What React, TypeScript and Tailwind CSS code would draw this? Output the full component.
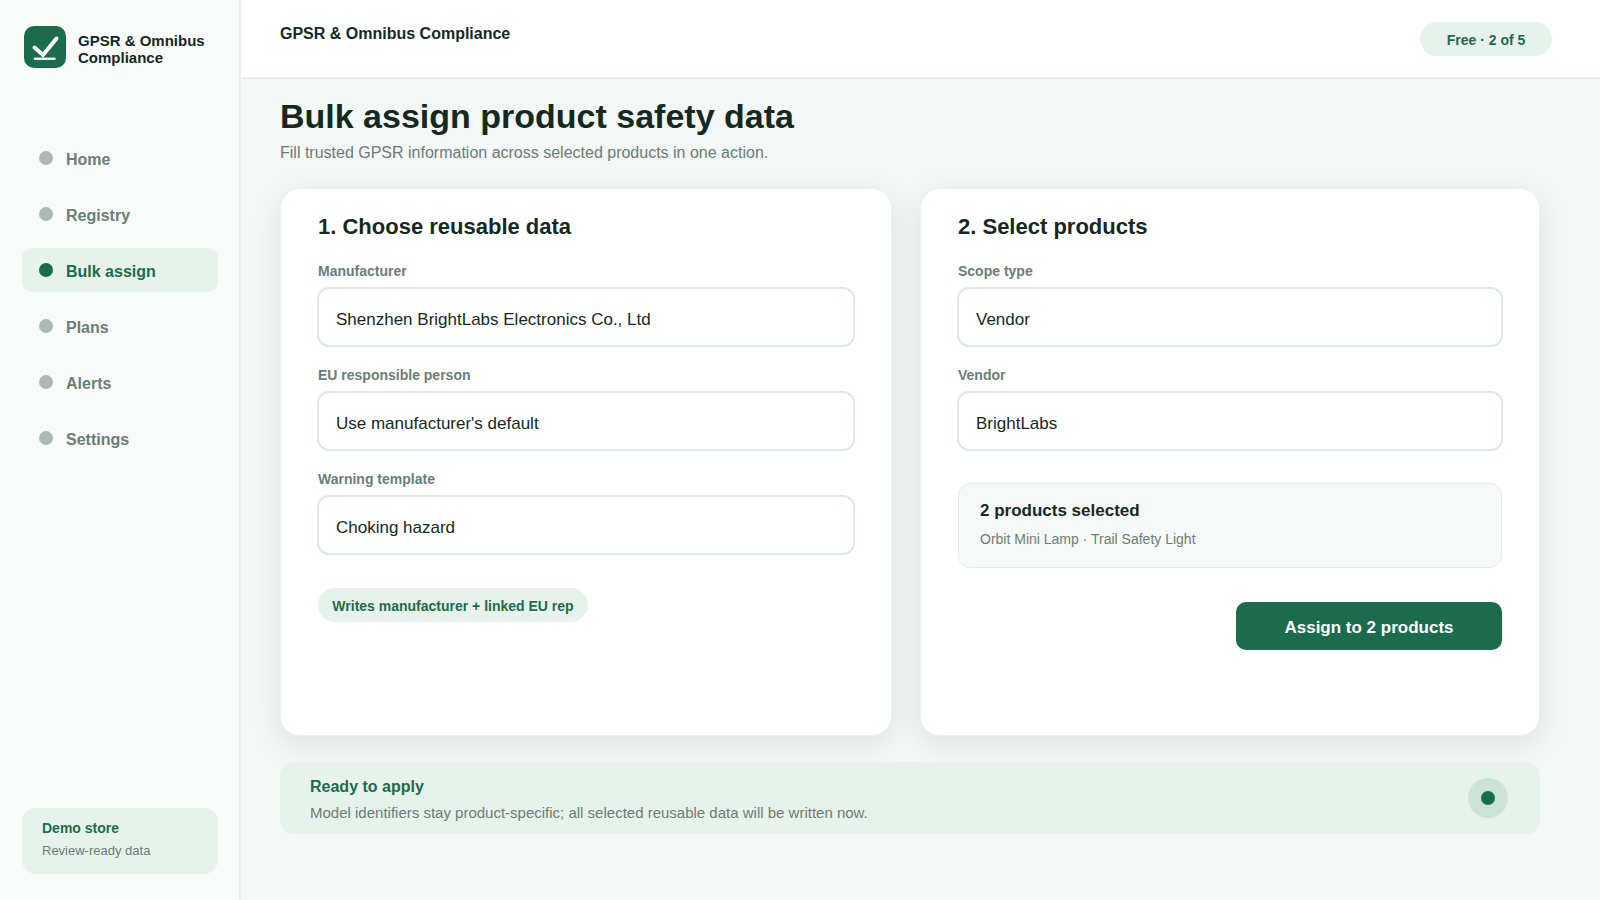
const navItems = ["Home", "Registry", "Bulk assign", "Plans", "Alerts", "Settings"];

const Logo = () => (
  <div className="flex h-[42px] w-[42px] shrink-0 items-center justify-center rounded-[10px] bg-[#1b6c4d]">
    <svg viewBox="0 0 42 42" className="h-[42px] w-[42px]" aria-hidden="true">
      <path d="M10.5 21.5 L19 29 L32.5 12.5" fill="none" stroke="#fff" strokeWidth="4" strokeLinecap="round" strokeLinejoin="miter" />
      <path d="M11 32.7 H30.5" fill="none" stroke="#e8f1ec" strokeWidth="2.6" strokeLinecap="round" />
    </svg>
  </div>
);

const Sidebar = () => (
  <aside className="flex h-[900px] w-[241px] shrink-0 flex-col border-r-2 border-[#e9efec] bg-[#f9fbfa]">
    <div className="flex items-center gap-3 pl-6 pt-[26px]">
      <Logo />
      <div className="pt-1 text-[15px] font-bold leading-[17px] text-[#15291f]">
        GPSR &amp; Omnibus
        <br />
        Compliance
      </div>
    </div>
    <nav className="mt-[68px] flex flex-col gap-3 pl-[22px]">
      {navItems.map((item) => {
        const active = item === "Bulk assign";
        return (
          <div
            key={item}
            className={
              active
                ? "flex h-[44px] w-[196px] gap-[13px] rounded-[10px] bg-[#e7f2ec] pl-[17px] pt-[15px] text-[#1b6c4d]"
                : "flex h-[44px] w-[196px] gap-[13px] rounded-[10px] pl-[17px] pt-[15px] text-[#6b7d75]"
            }
          >
            <span className={active ? "h-[14px] w-[14px] rounded-full bg-[#1b6c4d]" : "h-[14px] w-[14px] rounded-full bg-[#adbab4]"} />
            <span className="text-[16px] font-bold leading-[18px]">{item}</span>
          </div>
        );
      })}
    </nav>
    <div className="mb-[26px] ml-[22px] mt-auto h-[66px] w-[196px] rounded-[14px] bg-[#e7f2ec] px-5 pt-[12px]">
      <div className="text-[14px] font-bold leading-[16px] text-[#1b6c4d]">Demo store</div>
      <div className="mt-[7px] text-[13px] leading-[16px] text-[#6b7d75]">Review-ready data</div>
    </div>
  </aside>
);

const Field = ({ label, value }: { label: string; value: string }) => (
  <div className="flex flex-col">
    <label className="pl-[1px] text-[14px] font-bold leading-[16px] text-[#6b7d75]">{label}</label>
    <div className="mt-[8px] flex h-[60px] items-center rounded-[12px] border-2 border-[#dde8e4] bg-white pl-[17px] pt-[6px] text-[17px] text-[#15291f]">
      {value}
    </div>
  </div>
);

const App = () => {
  return (
    <div className="flex h-[900px] w-[1600px] overflow-hidden bg-[#f3f7f5] font-['Liberation_Sans',Arial,sans-serif]">
      <Sidebar />
      <div className="flex min-w-0 flex-1 flex-col">
        <header className="flex h-[79px] shrink-0 items-start justify-between border-b-2 border-[#e9efec] bg-white pl-[39px] pr-12">
          <div className="pt-6 text-[16px] font-bold leading-[20px] text-[#15291f]">GPSR &amp; Omnibus Compliance</div>
          <div className="mt-[22px] flex h-[34px] w-[132px] items-center justify-center rounded-full bg-[#e7f2ec] pt-[2px] text-[14px] font-bold text-[#1b6c4d]">
            Free · 2 of 5
          </div>
        </header>
        <main className="flex flex-col pl-[39px]">
          <h1 className="mt-[17px] text-[34px] font-bold leading-[40px] text-[#15291f]">Bulk assign product safety data</h1>
          <p className="mt-[7px] text-[16px] leading-[20px] text-[#6b7d75]">Fill trusted GPSR information across selected products in one action.</p>
          <div className="mt-[25px] grid h-[548px] grid-cols-[612px_620px] gap-7">
            <section className="rounded-[20px] border border-[#edf2ef] bg-white px-[36px] pt-[25px] shadow-[0_8px_32px_rgba(22,38,31,0.09)]">
              <h2 className="pl-[1px] text-[22px] font-bold leading-[26px] text-[#15291f]">1. Choose reusable data</h2>
              <div className="mt-[23px] flex flex-col gap-[20px]">
                <Field label="Manufacturer" value="Shenzhen BrightLabs Electronics Co., Ltd" />
                <Field label="EU responsible person" value="Use manufacturer's default" />
                <Field label="Warning template" value="Choking hazard" />
              </div>
              <div className="ml-[1px] mt-[33px] inline-flex h-[34px] w-[270px] items-center justify-center rounded-full bg-[#e7f2ec] pt-[3px] text-[14px] font-bold text-[#1b6c4d]">
                Writes manufacturer + linked EU rep
              </div>
            </section>
            <section className="flex flex-col rounded-[20px] border border-[#edf2ef] bg-white px-[36px] pt-[25px] shadow-[0_8px_32px_rgba(22,38,31,0.09)]">
              <h2 className="pl-[1px] text-[22px] font-bold leading-[26px] text-[#15291f]">2. Select products</h2>
              <div className="mt-[23px] flex flex-col gap-[20px]">
                <Field label="Scope type" value="Vendor" />
                <Field label="Vendor" value="BrightLabs" />
              </div>
              <div className="mx-[1px] mt-[32px] h-[85px] rounded-[12px] border border-[#e4ebe8] bg-[#f7f9f8] px-[21px] pt-[17px]">
                <div className="text-[17px] font-bold leading-[20px] text-[#15291f]">2 products selected</div>
                <div className="mt-[9px] text-[14px] leading-[18px] text-[#6b7d75]">Orbit Mini Lamp · Trail Safety Light</div>
              </div>
              <div className="mr-[1px] mt-[34px] flex justify-end">
                <button className="h-[48px] w-[266px] rounded-[10px] bg-[#1b6c4d] pt-[3px] text-[17px] font-bold text-white">Assign to 2 products</button>
              </div>
            </section>
          </div>
          <div className="mt-[26px] flex h-[72px] w-[1260px] items-center justify-between rounded-[14px] bg-[#e7f2ec] pl-[30px] pr-[32px]">
            <div className="pt-1">
              <div className="text-[16px] font-bold leading-[20px] text-[#1b6c4d]">Ready to apply</div>
              <div className="mt-[6px] text-[15px] leading-[20px] text-[#6b7d75]">Model identifiers stay product-specific; all selected reusable data will be written now.</div>
            </div>
            <div className="flex h-[40px] w-[40px] items-center justify-center rounded-full bg-[#cbe2d7]">
              <span className="h-[14px] w-[14px] rounded-full bg-[#1b6c4d]" />
            </div>
          </div>
        </main>
      </div>
    </div>
  );
};

export default App;
